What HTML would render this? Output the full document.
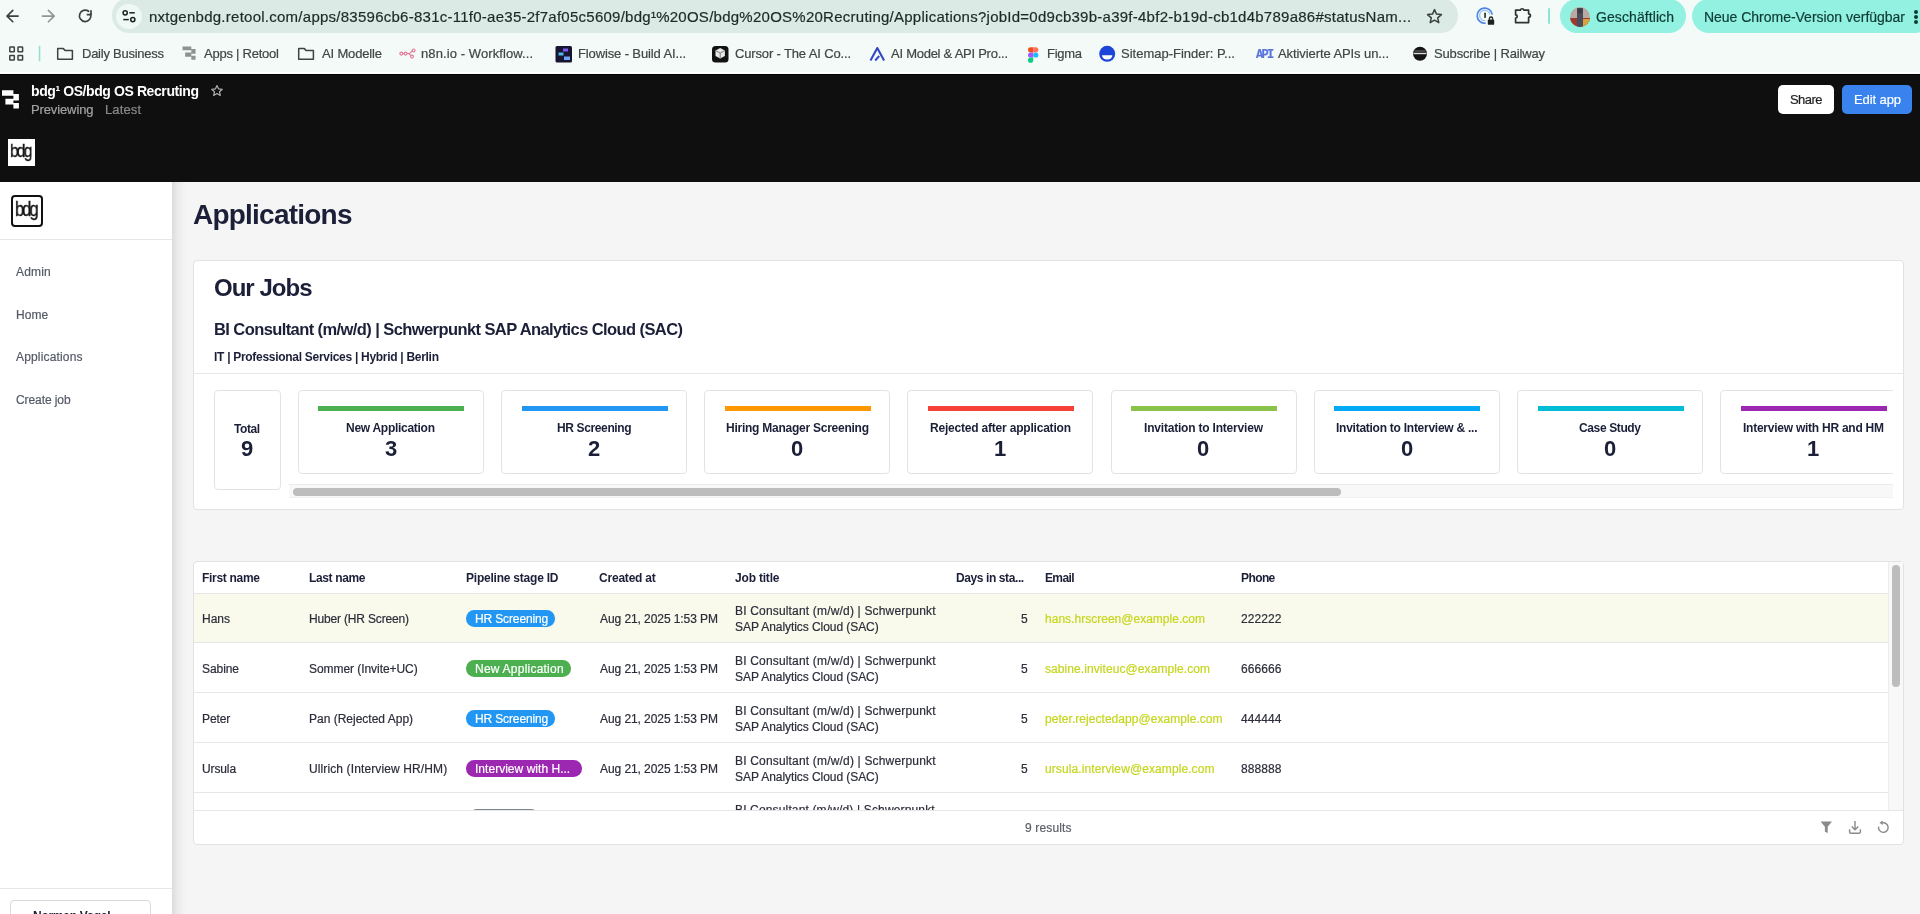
<!DOCTYPE html>
<html><head><meta charset="utf-8">
<style>
*{box-sizing:border-box;margin:0;padding:0}
html,body{width:1920px;height:914px;overflow:hidden;font-family:"Liberation Sans",sans-serif;background:#f5f5f5;position:relative}
.a{position:absolute}
.t{position:absolute;white-space:pre;line-height:1;will-change:transform;-webkit-text-stroke:0.2px currentColor}
svg{position:absolute;overflow:visible}
</style></head><body>
<!-- browser chrome -->
<div class="a" style="left:0;top:0;width:1920px;height:74px;background:#f4faf8"></div>
<div class="a" style="left:0;top:72px;width:1920px;height:2px;background:#ffffff"></div>
<div class="a" style="left:112px;top:-2px;width:1346px;height:35px;background:#dceae5;border-radius:17px"></div>
<div class="a" style="left:116px;top:4px;width:26px;height:25px;background:#eef8f5;border-radius:13px"></div>
<div class="a" style="left:1560px;top:-1px;width:126px;height:34px;background:#93f1e2;border-radius:17px"></div>
<div class="a" style="left:1692px;top:-1px;width:240px;height:34px;background:#93f1e2;border-radius:17px"></div>
<!-- retool header -->
<div class="a" style="left:0;top:74px;width:1920px;height:108px;background:#0f0f0f;border-top:1px solid #000"></div>
<div class="a" style="left:1778px;top:85px;width:56px;height:29px;background:#ffffff;border-radius:5px"></div>
<div class="a" style="left:1842px;top:85px;width:70px;height:29px;background:#3a82ee;border-radius:5px"></div>
<div class="a" style="left:8px;top:139px;width:27px;height:27px;background:#ffffff"></div>
<!-- sidebar -->
<div class="a" style="left:0;top:182px;width:172px;height:732px;background:#ffffff"></div>
<div class="a" style="left:0;top:239px;width:172px;height:1px;background:#e6e6e6"></div>
<div class="a" style="left:0;top:888px;width:172px;height:1px;background:#e6e6e6"></div>
<div class="a" style="left:10px;top:900px;width:141px;height:30px;border:1px solid #d9d9d9;border-radius:4px;background:#fff"></div>
<div class="a" style="left:11px;top:195px;width:32px;height:32px;border:2px solid #111;border-radius:4px"></div>
<div class="a" style="left:172px;top:182px;width:14px;height:732px;background:linear-gradient(90deg,#dcdcdc,#e9e9e9 35%,#f5f5f5)"></div>
<!-- our jobs card -->
<div class="a" style="left:193px;top:260px;width:1711px;height:250px;background:#fff;border:1px solid #e2e2e2;border-radius:4px"></div>
<div class="a" style="left:194px;top:373px;width:1709px;height:1px;background:#e6e6e6"></div>
<div class="a" style="left:214px;top:390px;width:67px;height:100px;border:1px solid #e3e3e3;border-radius:4px"></div>
<div class="a" style="left:289px;top:484px;width:1604px;height:14px;background:#f8f8f8;border-top:1px solid #ececec;border-bottom:1px solid #f0f0f0"></div>
<div class="a" style="left:293px;top:488px;width:1048px;height:8px;background:#bdbdbd;border-radius:4px"></div>
<div class="a" style="left:289px;top:385px;width:1604px;height:95px;overflow:hidden">
<div class="a" style="left:8.7px;top:5px;width:186px;height:84px;border:1px solid #e3e3e3;border-radius:4px;background:#fff"></div>
<div class="a" style="left:29.2px;top:21px;width:146px;height:5px;background:#4caf50"></div>
<div class="a" style="left:212.0px;top:5px;width:186px;height:84px;border:1px solid #e3e3e3;border-radius:4px;background:#fff"></div>
<div class="a" style="left:232.5px;top:21px;width:146px;height:5px;background:#2196f3"></div>
<div class="a" style="left:415.0px;top:5px;width:186px;height:84px;border:1px solid #e3e3e3;border-radius:4px;background:#fff"></div>
<div class="a" style="left:435.5px;top:21px;width:146px;height:5px;background:#ff9800"></div>
<div class="a" style="left:618.3px;top:5px;width:186px;height:84px;border:1px solid #e3e3e3;border-radius:4px;background:#fff"></div>
<div class="a" style="left:638.8px;top:21px;width:146px;height:5px;background:#f44336"></div>
<div class="a" style="left:821.5px;top:5px;width:186px;height:84px;border:1px solid #e3e3e3;border-radius:4px;background:#fff"></div>
<div class="a" style="left:842.0px;top:21px;width:146px;height:5px;background:#8bc34a"></div>
<div class="a" style="left:1024.7px;top:5px;width:186px;height:84px;border:1px solid #e3e3e3;border-radius:4px;background:#fff"></div>
<div class="a" style="left:1045.2px;top:21px;width:146px;height:5px;background:#03a9f4"></div>
<div class="a" style="left:1228.0px;top:5px;width:186px;height:84px;border:1px solid #e3e3e3;border-radius:4px;background:#fff"></div>
<div class="a" style="left:1248.5px;top:21px;width:146px;height:5px;background:#00bcd4"></div>
<div class="a" style="left:1431.2px;top:5px;width:186px;height:84px;border:1px solid #e3e3e3;border-radius:4px;background:#fff"></div>
<div class="a" style="left:1451.7px;top:21px;width:146px;height:5px;background:#9c27b0"></div>
</div>
<!-- table card -->
<div class="a" style="left:193px;top:561px;width:1711px;height:284px;background:#fff;border:1px solid #e2e2e2;border-radius:4px"></div>
<div class="a" style="left:194px;top:593px;width:1694px;height:1px;background:#e6e6e6"></div>
<div class="a" style="left:194px;top:594px;width:1694px;height:49px;background:#f9faeb"></div>
<div class="a" style="left:194px;top:642px;width:1694px;height:1px;background:#e6e6e6"></div>
<div class="a" style="left:194px;top:692px;width:1694px;height:1px;background:#e6e6e6"></div>
<div class="a" style="left:194px;top:742px;width:1694px;height:1px;background:#e6e6e6"></div>
<div class="a" style="left:194px;top:792px;width:1694px;height:1px;background:#e6e6e6"></div>
<div class="a" style="left:194px;top:810px;width:1709px;height:1px;background:#e6e6e6"></div>
<div class="a" style="left:1888px;top:562px;width:15px;height:248px;background:#f8f8f8;border-left:1px solid #ededed"></div>
<div class="a" style="left:1892px;top:565px;width:8px;height:122px;background:#bdbdbd;border-radius:4px"></div>
<div class="a" style="left:194px;top:793px;width:1694px;height:17px;overflow:hidden">
  <div class="t" style="left:540.5px;top:10.6px;font-size:12px;color:#2b2d3a;letter-spacing:0.15px">BI Consultant (m/w/d) | Schwerpunkt</div>
  <div class="a" style="left:275px;top:16.2px;width:70px;height:16px;background:#7d878d;border-radius:8px"></div>
</div>
<div class="a" style="left:465.6px;top:610.2px;width:89.4px;height:16.5px;background:#2196f3;border-radius:8.25px"></div>
<div class="a" style="left:465.6px;top:660.2px;width:105px;height:16.5px;background:#4caf50;border-radius:8.25px"></div>
<div class="a" style="left:465.6px;top:710.2px;width:89.4px;height:16.5px;background:#2196f3;border-radius:8.25px"></div>
<div class="a" style="left:465.6px;top:760.2px;width:116.6px;height:16.5px;background:#9c27b0;border-radius:8.25px"></div>

<!-- chrome nav icons -->
<svg style="left:0;top:0" width="100" height="34" viewBox="0 0 100 34" fill="none">
  <path d="M18.2 16.1H7M12.8 10.4L7 16.1l5.8 5.7" stroke="#3b4240" stroke-width="1.6" stroke-linecap="round" stroke-linejoin="round"/>
  <path d="M42.4 16.1h11.2M48.4 10.4l5.8 5.7-5.8 5.7" stroke="#8f9593" stroke-width="1.6" stroke-linecap="round" stroke-linejoin="round"/>
  <path d="M90.6 14.2A5.7 5.7 0 1 1 88.6 11.3" stroke="#3b4240" stroke-width="1.7" stroke-linecap="round"/>
  <path d="M91 10.2v4.4h-4.3" stroke="#3b4240" stroke-width="1.7" stroke-linejoin="miter"/>
</svg>
<!-- tune icon -->
<svg style="left:120px;top:8px" width="20" height="18" viewBox="0 0 20 18" fill="none" stroke="#1c2320" stroke-width="1.5">
  <circle cx="5.2" cy="4.8" r="2.1"/><path d="M9.3 4.8h5.5"/>
  <circle cx="12.8" cy="11.6" r="2.1"/><path d="M3.3 11.6h5.5"/>
</svg>
<!-- star in url bar -->
<svg style="left:1426px;top:8px" width="18" height="17" viewBox="0 0 18 17" fill="none">
  <path d="M8.5 1.6l2 4.5 4.9.5-3.7 3.3 1.1 4.8-4.3-2.5-4.3 2.5 1.1-4.8L1.6 6.6l4.9-.5z" stroke="#3a403e" stroke-width="1.5" stroke-linejoin="round"/>
</svg>
<!-- password manager -->
<svg style="left:1476px;top:6px" width="22" height="20" viewBox="0 0 22 20" fill="none">
  <path d="M16.3 8.6A7.6 7.6 0 1 0 9.6 17.2" stroke="#4a84ea" stroke-width="1.7"/>
  <path d="M13.9 8.4A5.2 5.2 0 1 0 9.2 14.7" stroke="#9bbdf3" stroke-width="1.3"/>
  <rect x="8.2" y="6.4" width="1.7" height="5.6" rx=".85" fill="#2d3431"/>
  <rect x="11.8" y="13.6" width="6.4" height="5.2" rx=".9" fill="#1c2320"/>
  <path d="M13.4 13.8v-1.2a1.6 1.6 0 0 1 3.2 0v1.2" stroke="#1c2320" stroke-width="1.3"/>
</svg>
<!-- puzzle -->
<svg style="left:1512px;top:6px" width="21" height="19" viewBox="0 0 21 19" fill="none">
  <path d="M3.6 4.2H8.3A1.9 1.9 0 0 1 12 4.2H16.6V7.8A1.8 1.8 0 0 1 16.6 11.4V16.6H3.6V12A1.6 1.6 0 0 0 3.6 8.8Z" stroke="#2b3230" stroke-width="1.7" stroke-linejoin="round"/>
</svg>
<div class="a" style="left:1548px;top:8px;width:2px;height:16px;background:#8fe5d5;border-radius:1px"></div>
<!-- avatar -->
<svg style="left:1569px;top:6px" width="22" height="22" viewBox="0 0 22 22">
  <defs><clipPath id="avc"><circle cx="11" cy="11" r="10"/></clipPath></defs>
  <g clip-path="url(#avc)">
    <rect width="22" height="22" fill="#b9a9a0"/>
    <rect x="0" y="12" width="22" height="10" fill="#9b3a2c"/>
    <rect x="13" y="13" width="9" height="9" fill="#d8a33a"/>
    <rect x="8" y="2" width="6" height="20" fill="#4a4d5c"/>
    <circle cx="11" cy="5" r="2.6" fill="#3b3d48"/>
  </g>
</svg>
<div class="a" style="left:1914px;top:10px;width:4px;height:4px;border-radius:2px;background:#0d3b33"></div>
<div class="a" style="left:1914px;top:15px;width:4px;height:4px;border-radius:2px;background:#0d3b33"></div>
<div class="a" style="left:1914px;top:20px;width:4px;height:4px;border-radius:2px;background:#0d3b33"></div>
<!-- bookmarks bar icons -->
<svg style="left:0;top:40px" width="1560" height="28" viewBox="0 40 1560 28" fill="none">
  <g stroke="#3c4340" stroke-width="1.5">
    <rect x="9.8" y="47.1" width="4.5" height="4.7" rx=".4"/><rect x="18" y="47.1" width="4.6" height="4.7" rx=".4"/>
    <rect x="9.8" y="55.4" width="4.5" height="4.7" rx=".4"/><rect x="18" y="55.4" width="4.6" height="4.7" rx=".4"/>
    <path d="M57.7 59.3V48.6h5.6l2 2h7.1v8.7z" stroke-linejoin="round"/>
    <path d="M298.7 59.3V48.6h5.6l2 2h7.1v8.7z" stroke-linejoin="round"/>
  </g>
  <rect x="38.8" y="45.8" width="1.5" height="15.4" fill="#93dfcf"/>
  <!-- retool favicon -->
  <path transform="translate(181 -19.5) scale(.77 .73)" d="M2 90.3H13.4V94H18.9V100.5H13.4V103H18.9V108.5H13.4V104.5H5.4V98.8H13.4V95.7H2Z" fill="#8e9290"/>
  <!-- n8n -->
  <g stroke="#e47a98" stroke-width="1.15" fill="none">
    <circle cx="401.3" cy="53.6" r="1.45"/><circle cx="405.6" cy="53.6" r="1.45"/>
    <circle cx="413.6" cy="50.4" r="1.45"/><circle cx="412" cy="56.6" r="1.45"/>
    <path d="M402.8 53.6h1.3M407.1 53.6h2.2l2.9-2.7M409.3 53.6l1.4 2.2"/>
  </g>
  <!-- flowise -->
  <rect x="555.5" y="46" width="16.5" height="16.5" rx="1.5" fill="#181532"/>
  <rect x="563" y="48.5" width="5" height="3" fill="#7b5cf0"/><rect x="558.5" y="52.5" width="5" height="3" fill="#4fb6e8"/><rect x="564" y="56.5" width="6" height="3.5" fill="#6fa3f5"/>
  <!-- cursor -->
  <rect x="712" y="46" width="16.5" height="16.5" rx="3.5" fill="#121212"/>
  <path d="M715.5 50.5l4.7-2.6 4.7 2.6v5.4l-4.7 2.7-4.7-2.7z" fill="#e8e8e8"/>
  <path d="M715.5 50.5l4.7 2.6 4.7-2.6M720.2 53.1v5.5" stroke="#7a7a7a" stroke-width="1"/>
  <!-- ai model -->
  <path d="M870.5 60.5l6.8-12.5 6.8 12.5" stroke="#3448c5" stroke-width="2.1" stroke-linejoin="round"/>
  <path d="M875.2 60.5l4-4.5" stroke="#3448c5" stroke-width="2"/>
  <!-- figma -->
  <path d="M1028 47.2h5.2v5.2H1030.6a2.6 2.6 0 0 1 0-5.2z" fill="#f24e1e"/>
  <path d="M1033.2 47.2h2.6a2.6 2.6 0 0 1 0 5.2h-2.6z" fill="#ff7262"/>
  <path d="M1030.6 52.4h2.6v5.2h-2.6a2.6 2.6 0 0 1 0-5.2z" fill="#a259ff"/>
  <circle cx="1035.8" cy="55" r="2.6" fill="#1abcfe"/>
  <path d="M1030.6 57.6h2.6v2.6a2.6 2.6 0 1 1-2.6-2.6z" fill="#0acf83"/>
  <!-- sitemap -->
  <circle cx="1107.2" cy="53.8" r="8" fill="#1b45d8"/>
  <path d="M1102 55.2h10.4a5.2 4.4 0 0 1-10.4 0z" fill="#fff"/>
  <!-- railway -->
  <circle cx="1420" cy="53.8" r="7" fill="#141414"/>
  <path d="M1413.5 53.5h13" stroke="#ddd" stroke-width="1.4"/>
  <path d="M1414.5 51h11" stroke="#777" stroke-width="1"/>
</svg>
<div class="t" style="left:1255.5px;top:48.6px;font-family:'Liberation Mono';font-weight:700;font-size:12px;color:#5a74dc;letter-spacing:-1.7px;line-height:1">API</div>
<!-- retool header logo -->
<svg style="left:0;top:80px" width="24" height="32" viewBox="0 80 24 32" fill="#ffffff">
  <path d="M2 90.3H13.4V94H18.9V100.5H13.4V103H18.9V108.5H13.4V104.5H5.4V98.8H13.4V95.7H2Z"/>
</svg>
<svg style="left:210px;top:84px" width="14" height="14" viewBox="0 0 14 14" fill="none">
  <path d="M7 1.5l1.6 3.4 3.7.4-2.8 2.5.8 3.6L7 9.5l-3.3 1.9.8-3.6-2.8-2.5 3.7-.4z" stroke="#b0b0b0" stroke-width="1.2" stroke-linejoin="round"/>
</svg>
<!-- bdg logos -->
<div class="t" style="left:10px;top:141px;font-size:19px;color:#111;-webkit-text-stroke:0.35px #111;letter-spacing:-2.2px;transform:scaleX(.82);transform-origin:left top;line-height:1">bdg</div>
<div class="t" style="left:14.5px;top:199px;font-size:20px;color:#111;-webkit-text-stroke:0.35px #111;letter-spacing:-2.3px;transform:scaleX(.82);transform-origin:left top;line-height:1">bdg</div>
<!-- table footer icons -->
<svg style="left:1815px;top:816px" width="80" height="24" viewBox="1815 816 80 24" fill="none">
  <path d="M1820.6 821.6h11.4l-4.3 5.2v6.3l-2.8-1.4v-4.9z" fill="#8a8a8a"/>
  <path d="M1855 821v8.5M1851.7 826.5l3.3 3.2 3.3-3.2M1849.6 829.2v2.8a1.2 1.2 0 0 0 1.2 1.2h8.4a1.2 1.2 0 0 0 1.2-1.2v-2.8" stroke="#8a8a8a" stroke-width="1.4"/>
  <path d="M1882.6 822.8A4.8 4.8 0 1 1 1878.6 826.6" stroke="#8a8a8a" stroke-width="1.4"/>
  <path d="M1879.4 822.8l3.4-2.2v4.4z" fill="#8a8a8a"/>
</svg>

<div class="t" style="left:149.00px;top:8.80px;font-size:15px;color:#1d2a25;letter-spacing:0.255px;">nxtgenbdg.retool.com/apps/83596cb6-831c-11f0-ae35-2f7af05c5609/bdg¹%20OS/bdg%20OS%20Recruting/Applications?jobId=0d9cb39b-a39f-4bf2-b19d-cb1d4b789a86#statusNam...</div>
<div class="t" style="left:1596.00px;top:9.65px;font-size:14px;color:#0d3b33;letter-spacing:0.087px;">Geschäftlich</div>
<div class="t" style="left:1704.00px;top:9.65px;font-size:14px;color:#0d3b33;letter-spacing:-0.020px;">Neue Chrome-Version verfügbar</div>
<div class="t" style="left:82.00px;top:47.00px;font-size:13px;color:#3d4744;letter-spacing:-0.251px;">Daily Business</div>
<div class="t" style="left:204.00px;top:47.00px;font-size:13px;color:#3d4744;letter-spacing:-0.234px;">Apps | Retool</div>
<div class="t" style="left:322.00px;top:47.00px;font-size:13px;color:#3d4744;letter-spacing:-0.158px;">AI Modelle</div>
<div class="t" style="left:421.00px;top:47.00px;font-size:13px;color:#3d4744;letter-spacing:0.089px;">n8n.io - Workflow...</div>
<div class="t" style="left:578.00px;top:47.00px;font-size:13px;color:#3d4744;letter-spacing:-0.127px;">Flowise - Build AI...</div>
<div class="t" style="left:735.00px;top:47.00px;font-size:13px;color:#3d4744;letter-spacing:-0.148px;">Cursor - The AI Co...</div>
<div class="t" style="left:891.00px;top:47.00px;font-size:13px;color:#3d4744;letter-spacing:-0.256px;">AI Model &amp; API Pro...</div>
<div class="t" style="left:1047.00px;top:47.00px;font-size:13px;color:#3d4744;letter-spacing:-0.281px;">Figma</div>
<div class="t" style="left:1121.00px;top:47.00px;font-size:13px;color:#3d4744;">Sitemap-Finder: P...</div>
<div class="t" style="left:1278.00px;top:47.00px;font-size:13px;color:#3d4744;letter-spacing:-0.086px;">Aktivierte APIs un...</div>
<div class="t" style="left:1434.00px;top:47.00px;font-size:13px;color:#3d4744;letter-spacing:-0.162px;">Subscribe | Railway</div>
<div class="t" style="left:31.00px;top:84.45px;font-size:14px;color:#ffffff;font-weight:700;-webkit-text-stroke:0;letter-spacing:-0.406px;">bdg¹ OS/bdg OS Recruting</div>
<div class="t" style="left:31.00px;top:103.00px;font-size:13px;color:#a3a3a3;letter-spacing:-0.122px;">Previewing</div>
<div class="t" style="left:105.00px;top:103.00px;font-size:13px;color:#8a8a8a;letter-spacing:0.116px;">Latest</div>
<div class="t" style="left:1789.75px;top:92.50px;font-size:13px;color:#1f1f1f;letter-spacing:-0.551px;">Share</div>
<div class="t" style="left:1853.50px;top:92.50px;font-size:13px;color:#ffffff;letter-spacing:-0.100px;">Edit app</div>
<div class="t" style="left:15.60px;top:266.14px;font-size:12px;color:#545a66;letter-spacing:0.171px;">Admin</div>
<div class="t" style="left:15.60px;top:308.64px;font-size:12px;color:#545a66;letter-spacing:0.061px;">Home</div>
<div class="t" style="left:15.60px;top:351.14px;font-size:12px;color:#545a66;letter-spacing:0.162px;">Applications</div>
<div class="t" style="left:15.60px;top:393.64px;font-size:12px;color:#545a66;letter-spacing:-0.086px;">Create job</div>
<div class="t" style="left:193.00px;top:200.90px;font-size:28px;color:#1c1f38;font-weight:700;-webkit-text-stroke:0;letter-spacing:-0.774px;">Applications</div>
<div class="t" style="left:214.00px;top:275.68px;font-size:24px;color:#1c1f38;font-weight:700;-webkit-text-stroke:0;letter-spacing:-0.980px;">Our Jobs</div>
<div class="t" style="left:213.50px;top:320.73px;font-size:16.5px;color:#1c1f38;font-weight:700;-webkit-text-stroke:0;letter-spacing:-0.587px;">BI Consultant (m/w/d) | Schwerpunkt SAP Analytics Cloud (SAC)</div>
<div class="t" style="left:213.50px;top:351.44px;font-size:12px;color:#1c1f38;font-weight:700;-webkit-text-stroke:0;letter-spacing:-0.291px;">IT | Professional Services | Hybrid | Berlin</div>
<div class="t" style="left:234.30px;top:422.84px;font-size:12px;color:#1c1f38;font-weight:700;-webkit-text-stroke:0;letter-spacing:-0.445px;">Total</div>
<div class="t" style="left:241.18px;top:438.38px;font-size:22px;color:#1c1f38;font-weight:700;-webkit-text-stroke:0;">9</div>
<div class="t" style="left:346.20px;top:422.14px;font-size:12px;color:#1c1f38;font-weight:700;-webkit-text-stroke:0;letter-spacing:-0.279px;">New Application</div>
<div class="t" style="left:384.57px;top:437.68px;font-size:22px;color:#1c1f38;font-weight:700;-webkit-text-stroke:0;">3</div>
<div class="t" style="left:556.70px;top:422.14px;font-size:12px;color:#1c1f38;font-weight:700;-webkit-text-stroke:0;letter-spacing:-0.372px;">HR Screening</div>
<div class="t" style="left:587.88px;top:437.68px;font-size:22px;color:#1c1f38;font-weight:700;-webkit-text-stroke:0;">2</div>
<div class="t" style="left:725.50px;top:422.14px;font-size:12px;color:#1c1f38;font-weight:700;-webkit-text-stroke:0;letter-spacing:-0.248px;">Hiring Manager Screening</div>
<div class="t" style="left:790.88px;top:437.68px;font-size:22px;color:#1c1f38;font-weight:700;-webkit-text-stroke:0;">0</div>
<div class="t" style="left:929.80px;top:422.14px;font-size:12px;color:#1c1f38;font-weight:700;-webkit-text-stroke:0;letter-spacing:-0.202px;">Rejected after application</div>
<div class="t" style="left:994.17px;top:437.68px;font-size:22px;color:#1c1f38;font-weight:700;-webkit-text-stroke:0;">1</div>
<div class="t" style="left:1144.00px;top:422.14px;font-size:12px;color:#1c1f38;font-weight:700;-webkit-text-stroke:0;letter-spacing:-0.198px;">Invitation to Interview</div>
<div class="t" style="left:1197.38px;top:437.68px;font-size:22px;color:#1c1f38;font-weight:700;-webkit-text-stroke:0;">0</div>
<div class="t" style="left:1335.95px;top:422.14px;font-size:12px;color:#1c1f38;font-weight:700;-webkit-text-stroke:0;letter-spacing:-0.257px;">Invitation to Interview &amp; ...</div>
<div class="t" style="left:1400.58px;top:437.68px;font-size:22px;color:#1c1f38;font-weight:700;-webkit-text-stroke:0;">0</div>
<div class="t" style="left:1579.00px;top:422.14px;font-size:12px;color:#1c1f38;font-weight:700;-webkit-text-stroke:0;letter-spacing:-0.373px;">Case Study</div>
<div class="t" style="left:1603.88px;top:437.68px;font-size:22px;color:#1c1f38;font-weight:700;-webkit-text-stroke:0;">0</div>
<div class="t" style="left:1742.70px;top:422.14px;font-size:12px;color:#1c1f38;font-weight:700;-webkit-text-stroke:0;letter-spacing:-0.247px;">Interview with HR and HM</div>
<div class="t" style="left:1807.08px;top:437.68px;font-size:22px;color:#1c1f38;font-weight:700;-webkit-text-stroke:0;">1</div>
<div class="t" style="left:202.20px;top:571.64px;font-size:12px;color:#1c1f38;font-weight:700;-webkit-text-stroke:0;letter-spacing:-0.299px;">First name</div>
<div class="t" style="left:309.00px;top:571.64px;font-size:12px;color:#1c1f38;font-weight:700;-webkit-text-stroke:0;letter-spacing:-0.357px;">Last name</div>
<div class="t" style="left:465.80px;top:571.64px;font-size:12px;color:#1c1f38;font-weight:700;-webkit-text-stroke:0;letter-spacing:-0.221px;">Pipeline stage ID</div>
<div class="t" style="left:598.80px;top:571.64px;font-size:12px;color:#1c1f38;font-weight:700;-webkit-text-stroke:0;letter-spacing:-0.210px;">Created at</div>
<div class="t" style="left:734.50px;top:571.64px;font-size:12px;color:#1c1f38;font-weight:700;-webkit-text-stroke:0;letter-spacing:-0.189px;">Job title</div>
<div class="t" style="left:955.60px;top:571.64px;font-size:12px;color:#1c1f38;font-weight:700;-webkit-text-stroke:0;letter-spacing:-0.398px;">Days in sta...</div>
<div class="t" style="left:1044.60px;top:571.64px;font-size:12px;color:#1c1f38;font-weight:700;-webkit-text-stroke:0;letter-spacing:-0.629px;">Email</div>
<div class="t" style="left:1240.60px;top:571.64px;font-size:12px;color:#1c1f38;font-weight:700;-webkit-text-stroke:0;letter-spacing:-0.593px;">Phone</div>
<div class="t" style="left:202.20px;top:613.04px;font-size:12px;color:#2b2d3a;letter-spacing:-0.005px;">Hans</div>
<div class="t" style="left:309.00px;top:613.04px;font-size:12px;color:#2b2d3a;letter-spacing:-0.169px;">Huber (HR Screen)</div>
<div class="t" style="left:474.50px;top:613.04px;font-size:12px;color:#ffffff;letter-spacing:-0.137px;">HR Screening</div>
<div class="t" style="left:599.50px;top:613.04px;font-size:12px;color:#2b2d3a;letter-spacing:-0.075px;">Aug 21, 2025 1:53 PM</div>
<div class="t" style="left:734.50px;top:605.04px;font-size:12px;color:#2b2d3a;letter-spacing:0.176px;">BI Consultant (m/w/d) | Schwerpunkt</div>
<div class="t" style="left:734.50px;top:621.24px;font-size:12px;color:#2b2d3a;letter-spacing:-0.061px;">SAP Analytics Cloud (SAC)</div>
<div class="t" style="left:1021.31px;top:613.04px;font-size:12px;color:#2b2d3a;">5</div>
<div class="t" style="left:1044.60px;top:613.04px;font-size:12px;color:#c5d61e;letter-spacing:0.017px;">hans.hrscreen@example.com</div>
<div class="t" style="left:1240.60px;top:613.04px;font-size:12px;color:#2b2d3a;letter-spacing:0.091px;">222222</div>
<div class="t" style="left:202.20px;top:663.04px;font-size:12px;color:#2b2d3a;letter-spacing:-0.075px;">Sabine</div>
<div class="t" style="left:309.00px;top:663.04px;font-size:12px;color:#2b2d3a;letter-spacing:-0.058px;">Sommer (Invite+UC)</div>
<div class="t" style="left:474.50px;top:663.04px;font-size:12px;color:#ffffff;letter-spacing:0.229px;">New Application</div>
<div class="t" style="left:599.50px;top:663.04px;font-size:12px;color:#2b2d3a;letter-spacing:-0.075px;">Aug 21, 2025 1:53 PM</div>
<div class="t" style="left:734.50px;top:655.04px;font-size:12px;color:#2b2d3a;letter-spacing:0.176px;">BI Consultant (m/w/d) | Schwerpunkt</div>
<div class="t" style="left:734.50px;top:671.24px;font-size:12px;color:#2b2d3a;letter-spacing:-0.061px;">SAP Analytics Cloud (SAC)</div>
<div class="t" style="left:1021.31px;top:663.04px;font-size:12px;color:#2b2d3a;">5</div>
<div class="t" style="left:1044.60px;top:663.04px;font-size:12px;color:#c5d61e;letter-spacing:0.079px;">sabine.inviteuc@example.com</div>
<div class="t" style="left:1240.60px;top:663.04px;font-size:12px;color:#2b2d3a;letter-spacing:0.091px;">666666</div>
<div class="t" style="left:202.20px;top:713.04px;font-size:12px;color:#2b2d3a;letter-spacing:-0.122px;">Peter</div>
<div class="t" style="left:309.00px;top:713.04px;font-size:12px;color:#2b2d3a;">Pan (Rejected App)</div>
<div class="t" style="left:474.50px;top:713.04px;font-size:12px;color:#ffffff;letter-spacing:-0.137px;">HR Screening</div>
<div class="t" style="left:599.50px;top:713.04px;font-size:12px;color:#2b2d3a;letter-spacing:-0.075px;">Aug 21, 2025 1:53 PM</div>
<div class="t" style="left:734.50px;top:705.04px;font-size:12px;color:#2b2d3a;letter-spacing:0.176px;">BI Consultant (m/w/d) | Schwerpunkt</div>
<div class="t" style="left:734.50px;top:721.24px;font-size:12px;color:#2b2d3a;letter-spacing:-0.061px;">SAP Analytics Cloud (SAC)</div>
<div class="t" style="left:1021.31px;top:713.04px;font-size:12px;color:#2b2d3a;">5</div>
<div class="t" style="left:1044.60px;top:713.04px;font-size:12px;color:#c5d61e;letter-spacing:0.044px;">peter.rejectedapp@example.com</div>
<div class="t" style="left:1240.60px;top:713.04px;font-size:12px;color:#2b2d3a;letter-spacing:0.091px;">444444</div>
<div class="t" style="left:202.20px;top:763.04px;font-size:12px;color:#2b2d3a;letter-spacing:-0.117px;">Ursula</div>
<div class="t" style="left:309.00px;top:763.04px;font-size:12px;color:#2b2d3a;letter-spacing:0.119px;">Ullrich (Interview HR/HM)</div>
<div class="t" style="left:474.50px;top:763.04px;font-size:12px;color:#ffffff;letter-spacing:0.028px;">Interview with H...</div>
<div class="t" style="left:599.50px;top:763.04px;font-size:12px;color:#2b2d3a;letter-spacing:-0.075px;">Aug 21, 2025 1:53 PM</div>
<div class="t" style="left:734.50px;top:755.04px;font-size:12px;color:#2b2d3a;letter-spacing:0.176px;">BI Consultant (m/w/d) | Schwerpunkt</div>
<div class="t" style="left:734.50px;top:771.24px;font-size:12px;color:#2b2d3a;letter-spacing:-0.061px;">SAP Analytics Cloud (SAC)</div>
<div class="t" style="left:1021.31px;top:763.04px;font-size:12px;color:#2b2d3a;">5</div>
<div class="t" style="left:1044.60px;top:763.04px;font-size:12px;color:#c5d61e;letter-spacing:0.095px;">ursula.interview@example.com</div>
<div class="t" style="left:1240.60px;top:763.04px;font-size:12px;color:#2b2d3a;letter-spacing:0.091px;">888888</div>
<div class="t" style="left:1025.20px;top:822.04px;font-size:12px;color:#5d6068;letter-spacing:0.155px;">9 results</div>
<div class="t" style="left:32.80px;top:909.84px;font-size:12px;color:#1c1f38;font-weight:700;-webkit-text-stroke:0;letter-spacing:-0.270px;">Norman Vogel</div>
</body></html>
